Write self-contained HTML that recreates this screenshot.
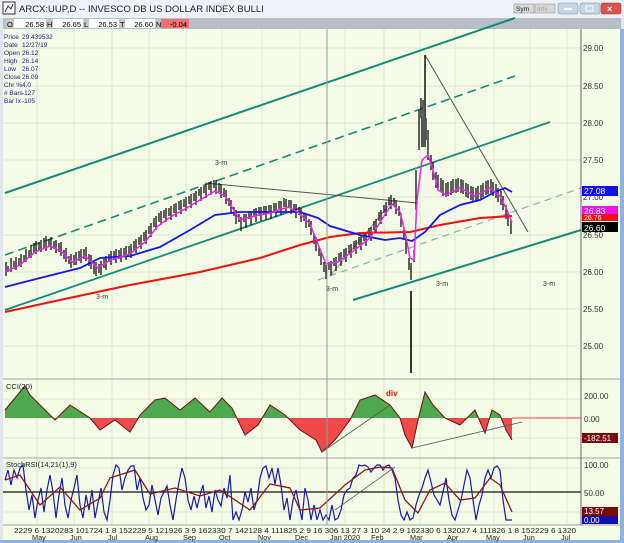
<!DOCTYPE html>
<html><head><meta charset="utf-8"><style>
html,body{margin:0;padding:0;background:#fff;}
body{width:624px;height:543px;overflow:hidden;font-family:"Liberation Sans",sans-serif;}
svg{display:block}
</style></head><body>
<svg width="624" height="543" viewBox="0 0 624 543" xmlns="http://www.w3.org/2000/svg" font-family="Liberation Sans, sans-serif">
<defs>
<clipPath id="up"><rect x="0" y="380" width="581" height="38"/></clipPath>
<clipPath id="dn"><rect x="0" y="418" width="581" height="40"/></clipPath>
</defs>
<rect x="0" y="0" width="624" height="543" fill="#dfe6ee"/>
<rect x="0" y="0" width="624" height="18" fill="#eef2f7"/>
<rect x="3" y="2" width="12" height="12" fill="#fff" stroke="#333" stroke-width="1"/>
<path d="M5 12 L8 6 L11 9 L13 4" stroke="#335" fill="none"/>
<text x="19" y="12" font-size="9.5" fill="#223">ARCX:UUP,D -- INVESCO DB US DOLLAR INDEX BULLI</text>
<rect x="514" y="4" width="20" height="9" fill="#d8d8d8" stroke="#888" stroke-width=".5"/><text x="516" y="11" font-size="6.5" fill="#222">Sym</text>
<rect x="535" y="4" width="20" height="9" fill="#d8d8d8" stroke="#888" stroke-width=".5"/><text x="537" y="11" font-size="6.5" fill="#999">Intv</text>
<rect x="558" y="3" width="20" height="11" rx="2" fill="#c9d6e6" stroke="#7a8aa0" stroke-width=".5"/><rect x="564" y="8" width="8" height="2" fill="#fff"/>
<rect x="580" y="3" width="20" height="11" rx="2" fill="#c9d6e6" stroke="#7a8aa0" stroke-width=".5"/><rect x="586" y="6" width="7" height="5" fill="none" stroke="#fff"/>
<rect x="601" y="3" width="20" height="11" rx="2" fill="#d9534a" stroke="#8a3a30" stroke-width=".5"/><text x="607" y="12" font-size="9" fill="#fff" font-weight="bold">×</text>
<rect x="3" y="18" width="618" height="11" fill="#b8bec6"/>
<rect x="6" y="19" width="8" height="9" fill="#c8c8c8"/><text x="7" y="27" font-size="7.5">O</text>
<rect x="14" y="19" width="32" height="9" fill="#fff"/><text x="44" y="27" font-size="7.5" text-anchor="end">26.58</text>
<rect x="46" y="19" width="7" height="9" fill="#c8c8c8"/><text x="47" y="27" font-size="7.5">H</text>
<rect x="53" y="19" width="30" height="9" fill="#fff"/><text x="81" y="27" font-size="7.5" text-anchor="end">26.65</text>
<rect x="83" y="19" width="6" height="9" fill="#c8c8c8"/><text x="84" y="27" font-size="7.5">L</text>
<rect x="89" y="19" width="30" height="9" fill="#fff"/><text x="117" y="27" font-size="7.5" text-anchor="end">26.53</text>
<rect x="119" y="19" width="6" height="9" fill="#c8c8c8"/><text x="120" y="27" font-size="7.5">T</text>
<rect x="125" y="19" width="30" height="9" fill="#fff"/><text x="153" y="27" font-size="7.5" text-anchor="end">26.60</text>
<rect x="155" y="19" width="6" height="9" fill="#c8c8c8"/><text x="156" y="27" font-size="7.5">N</text>
<rect x="161" y="19" width="28" height="9" fill="#f07070"/><text x="187" y="27" font-size="7.5" text-anchor="end">-0.04</text>
<rect x="3" y="29" width="618" height="511" fill="#f4fbe6"/>
<g stroke="#dde8cc" stroke-width="1">
<path d="M37 29V525M74 29V525M112 29V525M149 29V525M186 29V525M222 29V525M262 29V525M300 29V525M345 29V525M384 29V525M420 29V525M455 29V525M494 29V525M530 29V525M567 29V525"/>
<path d="M3 48H581M3 86H581M3 123H581M3 160H581M3 197H581M3 235H581M3 272H581M3 309H581M3 346H581M3 399H581M3 438H581M3 468H581M3 512H581"/>
</g>
<!-- channel lines -->
<line x1="5" y1="193" x2="515" y2="18" stroke="#148a80" stroke-width="2"/>
<line x1="5" y1="255" x2="515" y2="76" stroke="#148a80" stroke-width="1.6" stroke-dasharray="9,5"/>
<line x1="5" y1="310" x2="550" y2="122" stroke="#148a80" stroke-width="1.8"/>
<line x1="353" y1="300" x2="581" y2="230" stroke="#148a80" stroke-width="2"/>
<line x1="318" y1="280" x2="581" y2="188" stroke="#7ab8b0" stroke-width="1.2" stroke-dasharray="7,5"/>
<line x1="425" y1="55" x2="528" y2="232" stroke="#555" stroke-width="1"/>
<line x1="205" y1="183" x2="418" y2="203" stroke="#555" stroke-width="1"/>
<line x1="330" y1="276" x2="395" y2="198" stroke="#777" stroke-width=".8"/>
<!-- price bars -->
<path stroke="#111" stroke-width="1.3" fill="none" d="M6 262V276M8 266V272M11 258V272M14 261V269M16 257V270M19 258V266M21 254V267M24 255V262M26 249V262M29 250V258M31 245V258M34 243V252M36 241V254M39 242V250M41 240V252M44 238V248M46 236V251M49 239V246M51 237V250M54 241V249M56 240V253M59 243V252M61 242V256M64 250V259M66 248V262M69 256V264M71 254V268M74 255V265M76 252V265M79 251V261M81 249V263M84 249V259M86 247V261M89 254V266M91 255V269M94 262V274M96 262V276M99 264V273M101 261V275M104 258V268M106 256V270M109 254V262M111 251V265M114 251V260M116 249V263M119 250V259M121 248V262M124 248V257M126 246V260M129 246V255M131 244V258M134 241V250M136 239V253M139 237V245M141 235V249M144 232V241M146 230V244M149 226V234M151 223V237M154 218V227M156 216V230M159 213V222M161 211V225M164 210V218M166 208V222M169 208V216M171 206V220M174 204V213M176 203V217M179 201V210M181 200V214M184 199V207M186 197V211M189 196V204M191 194V208M194 193V201M196 191V205M199 189V196M201 187V201M204 186V193M206 184V198M209 182V190M211 181V195M214 180V188M216 180V194M219 183V192M221 184V198M224 188V197M226 190V204M229 198V206M231 200V214M234 207V216M236 210V224M239 214V222M241 217V231M244 214V222M246 214V228M249 211V219M251 211V225M254 209V217M256 208V222M259 207V215M261 207V221M264 206V214M266 206V220M269 205V213M271 205V219M274 203V211M276 203V217M279 201V209M281 201V215M284 198V207M286 199V213M289 200V208M291 200V214M294 204V212M296 204V218M299 207V215M301 208V222M304 213V221M306 214V228M309 219V227M311 221V235M314 233V244M316 237V251M319 247V256M321 251V265M324 262V272M326 265V279M329 262V270M331 261V275M334 258V266M336 257V271M339 253V261M341 252V266M344 249V257M346 248V262M349 245V253M351 244V258M354 241V249M356 240V254M359 237V245M361 236V250M364 233V241M366 232V246M369 228V237M371 227V241M374 221V230M376 219V233M379 212V221M381 210V224M384 205V213M386 202V216M389 197V205M391 195V209M394 198V206M396 200V214M399 206V216M401 213V227M404 228V240M406 240V254M409 258V270M411 263V280M414 250V262M416 170V210M419 110V150M421 98V118M423 100V145M426 118V140M428 130V160M431 155V170M433 162V180M436 172V188M438 175V190M441 178V192M443 180V196M446 183V197M448 182V196M451 181V195M453 179V193M456 179V193M458 178V192M461 179V193M463 180V194M466 183V197M468 184V198M471 186V200M473 187V201M476 188V202M478 186V200M481 185V199M483 183V197M486 181V195M488 180V194M491 179V193M493 182V196M496 184V198M498 188V202M501 191V205M503 196V210M506 205V219M508 212V226M511 220V234"/>
<line x1="411" y1="291" x2="411" y2="373" stroke="#333" stroke-width="2"/>
<line x1="425" y1="55" x2="425" y2="140" stroke="#111" stroke-width="1.5"/>
<rect x="421" y="117" width="5" height="30" fill="#555"/>
<!-- MAs -->
<polyline fill="none" stroke="#ee1111" stroke-width="2" points="5,312 60,300 130,285 200,272 260,258 300,245 330,237 360,233 410,232 440,225 480,218 512,216"/>
<polyline fill="none" stroke="#1515ee" stroke-width="1.8" points="5,287 40,278 80,268 100,258 130,256 160,247 190,230 215,215 240,212 270,212 300,212 318,218 330,226 360,235 385,240 400,238 412,241 425,232 440,215 460,205 480,200 495,192 505,188 512,192"/>
<polyline fill="none" stroke="#ee22ee" stroke-width="1.5" points="5,272 20,265 35,252 50,246 62,252 72,262 85,256 98,268 110,260 130,254 145,242 158,226 172,216 185,209 200,200 215,191 225,196 240,220 255,216 270,213 288,207 298,212 310,224 318,244 326,264 338,262 352,252 370,238 384,216 392,204 400,212 405,232 410,258 414,260 417,200 422,160 428,155 433,170 438,190 446,195 460,188 475,196 490,188 500,196 506,208 512,222"/>
<!-- CCI -->
<polygon clip-path="url(#up)" fill="#4ea84e" stroke="none" points="5,418 5,410 15,398 20,392 25,386 30,395 40,405 55,420 70,405 90,418 100,430 115,420 130,432 140,415 155,400 165,398 180,410 195,398 210,412 222,398 232,408 245,435 258,425 270,405 285,415 300,430 316,440 322,452 335,440 350,420 360,400 375,395 390,405 400,418 405,435 412,448 418,420 425,392 433,405 445,418 460,425 475,410 485,433 492,410 500,415 506,430 512,440 512,418"/>
<polygon clip-path="url(#dn)" fill="#ee4a4a" stroke="none" points="5,418 5,410 15,398 20,392 25,386 30,395 40,405 55,420 70,405 90,418 100,430 115,420 130,432 140,415 155,400 165,398 180,410 195,398 210,412 222,398 232,408 245,435 258,425 270,405 285,415 300,430 316,440 322,452 335,440 350,420 360,400 375,395 390,405 400,418 405,435 412,448 418,420 425,392 433,405 445,418 460,425 475,410 485,433 492,410 500,415 506,430 512,440 512,418"/>
<polyline fill="none" stroke="#6a1010" stroke-width="1" points="5,410 15,398 20,392 25,386 30,395 40,405 55,420 70,405 90,418 100,430 115,420 130,432 140,415 155,400 165,398 180,410 195,398 210,412 222,398 232,408 245,435 258,425 270,405 285,415 300,430 316,440 322,452 335,440 350,420 360,400 375,395 390,405 400,418 405,435 412,448 418,420 425,392 433,405 445,418 460,425 475,410 485,433 492,410 500,415 506,430 512,440"/>
<line x1="512" y1="418" x2="581" y2="418" stroke="#ee4444" stroke-width="1"/>
<line x1="322" y1="452" x2="390" y2="405" stroke="#555" stroke-width=".8"/>
<line x1="412" y1="448" x2="522" y2="422" stroke="#555" stroke-width=".8"/>
<!-- StochRSI -->
<line x1="3" y1="492" x2="581" y2="492" stroke="#111" stroke-width="1.2"/>
<polyline fill="none" stroke="#1a1aa8" stroke-width="1.2" points="5,480 8,470 11,485 14,470 17,478 20,468 23,465 26,490 29,510 32,495 35,518 38,500 41,488 44,512 47,490 50,475 53,492 56,518 59,495 62,478 65,505 68,518 71,500 74,488 77,475 80,505 83,518 86,495 89,510 92,490 95,518 98,503 101,488 104,512 107,520 110,500 113,475 116,465 119,468 122,490 125,478 128,470 131,466 134,466 137,490 140,478 143,498 146,510 149,505 152,485 155,500 158,515 161,498 164,492 167,486 170,505 173,520 176,500 179,482 182,468 185,478 188,500 191,510 194,496 197,508 200,495 203,485 206,508 209,496 212,512 215,490 218,500 221,506 224,488 227,498 230,475 233,520 236,512 239,520 242,510 245,492 248,502 251,488 254,510 257,500 260,478 263,468 266,466 269,478 272,468 275,484 278,468 281,485 284,510 287,498 290,520 293,500 296,490 299,505 302,520 305,488 308,500 311,520 314,505 317,520 320,510 323,520 326,515 329,520 332,505 335,520 338,518 341,510 344,495 347,490 350,488 353,478 356,475 359,465 362,466 365,465 368,467 371,472 374,468 377,465 380,465 383,470 386,466 389,465 392,470 395,478 398,500 401,515 404,520 407,512 410,520 413,518 416,505 419,495 422,488 425,478 428,470 431,482 434,495 437,500 440,505 443,492 446,478 449,500 452,515 455,520 458,510 461,500 464,485 467,470 470,478 473,500 476,520 479,505 482,495 485,478 488,470 491,478 494,468 497,466 500,470 503,500 506,520 509,520 512,520"/>
<polyline fill="none" stroke="#8a1a1a" stroke-width="1.3" points="5,480 20,475 40,505 60,487 80,510 100,498 110,478 135,470 150,494 175,488 200,496 220,490 250,510 270,484 290,488 300,510 320,508 345,485 365,470 380,467 392,468 405,500 418,513 430,490 445,483 460,500 475,498 490,478 500,485 512,512"/>
<line x1="335" y1="510" x2="395" y2="467" stroke="#555" stroke-width=".8"/>
<!-- separators -->
<line x1="3" y1="379" x2="621" y2="379" stroke="#9aa" stroke-width="1"/>
<line x1="3" y1="458" x2="621" y2="458" stroke="#9aa" stroke-width="1"/>
<line x1="3" y1="525" x2="621" y2="525" stroke="#9aa" stroke-width="1"/>
<line x1="581" y1="29" x2="581" y2="525" stroke="#666" stroke-width="1"/>
<line x1="327" y1="29" x2="327" y2="525" stroke="#999" stroke-width="1"/>
<rect x="620" y="29" width="4" height="514" fill="#8fb3de"/>
<rect x="0" y="540" width="624" height="3" fill="#8fb3de"/>
<g font-size="6.5" fill="#22228a">
<text x="4" y="39">Price</text><text x="22" y="39">29.439532</text>
<text x="4" y="47">Date</text><text x="22" y="47">12/27/19</text>
<text x="4" y="55">Open</text><text x="22" y="55">26.12</text>
<text x="4" y="63">High</text><text x="22" y="63">26.14</text>
<text x="4" y="71">Low</text><text x="22" y="71">26.07</text>
<text x="4" y="79">Close</text><text x="22" y="79">26.09</text>
<text x="4" y="87">Chr %</text><text x="22" y="87">4.0</text>
<text x="4" y="95"># Bars</text><text x="22" y="95">-127</text>
<text x="4" y="103">Bar Ix</text><text x="22" y="103">-105</text>
</g>
<g font-size="8" fill="#333">
<text x="583" y="51">29.00</text><text x="583" y="89">28.50</text><text x="583" y="126">28.00</text><text x="583" y="163">27.50</text>
<text x="583" y="200">27.00</text><text x="583" y="238">26.50</text><text x="583" y="275">26.00</text><text x="583" y="312">25.50</text><text x="583" y="349">25.00</text>
</g>
<rect x="582" y="186" width="36" height="10" fill="#1010ee"/><text x="584" y="194" font-size="8.5" fill="#fff">27.08</text>
<rect x="582" y="206" width="36" height="9" fill="#ee10ee"/><text x="584" y="214" font-size="8.5" fill="#fff">26.83</text>
<rect x="582" y="214" width="36" height="7" fill="#ee1010"/><text x="584" y="220" font-size="7" fill="#fff">26.76</text>
<rect x="582" y="222" width="36" height="10" fill="#000"/><text x="584" y="231" font-size="8.5" fill="#fff">26.60</text>
<g font-size="7" fill="#333">
<text x="215" y="165">3-m</text><text x="96" y="299">3-m</text><text x="326" y="291">3-m</text><text x="436" y="286">3-m</text><text x="543" y="286">3-m</text>
</g>
<text x="6" y="389" font-size="7.5" fill="#222">CCI(20)</text>
<text x="386" y="396" font-size="8" fill="#ee1010" font-weight="bold">div</text>
<text x="584" y="399" font-size="8" fill="#333">200.00</text>
<text x="584" y="422" font-size="8" fill="#333">0.00</text>
<rect x="582" y="433" width="36" height="10" fill="#7a0a0a"/><text x="584" y="441" font-size="8" fill="#fff">-182.51</text>
<text x="6" y="467" font-size="7.5" fill="#222">StochRSI(14,21(1),9)</text>
<text x="584" y="468" font-size="8" fill="#333">100.00</text>
<text x="584" y="496" font-size="8" fill="#333">50.00</text>
<rect x="582" y="507" width="36" height="9" fill="#7a0a0a"/><text x="584" y="514" font-size="8" fill="#fff">13.57</text>
<rect x="582" y="516" width="36" height="8" fill="#1010aa"/><text x="584" y="523" font-size="8" fill="#fff">0.00</text>
<text x="14" y="533" font-size="7.3" fill="#222" textLength="562" lengthAdjust="spacingAndGlyphs">2229 6 1320283 101724 1 8 152229 5 121926 3 9 162330 7 142128 4 111825 2 9 16 306 13 27 3 10 24 2 9 162330 6 132027 4 111826 1 8 152229 6 1320</text>
<g font-size="7.3" fill="#222">
<text x="32" y="540">May</text><text x="70" y="540">Jun</text><text x="108" y="540">Jul</text><text x="145" y="540">Aug</text><text x="183" y="540">Sep</text><text x="219" y="540">Oct</text><text x="258" y="540">Nov</text><text x="295" y="540">Dec</text><text x="330" y="540">Jan 2020</text><text x="371" y="540">Feb</text><text x="410" y="540">Mar</text><text x="447" y="540">Apr</text><text x="486" y="540">May</text><text x="523" y="540">Jun</text><text x="561" y="540">Jul</text>
</g>
</svg>
</body></html>
